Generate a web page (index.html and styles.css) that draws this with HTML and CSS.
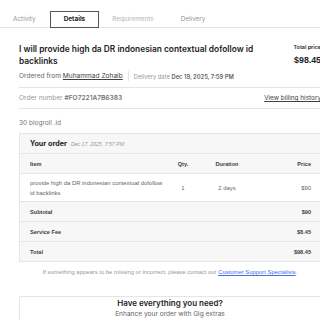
FILE: index.html
```html
<!DOCTYPE html>
<html lang="en">

<head>
    <meta charset="UTF-8">
    <meta name="viewport" content="width=device-width, initial-scale=1.0">
    <title>Order Details</title>
    <link rel="stylesheet" href="styles.css">
</head>

<body>

    <nav class="tabs">
        <a class="tab">Activity</a>
        <a class="tab active">Details</a>
        <a class="tab pale">Requirements</a>
        <a class="tab">Delivery</a>
    </nav>

    <main class="order">
        <header class="order-head">
            <div class="title-col">
                <h1>I will provide high da DR indonesian contextual dofollow id backlinks</h1>
                <p class="meta">
                    <span>Ordered from <a class="seller">Muhammad Zohaib</a></span>
                    <span class="divider"></span>
                    <span class="faint">Delivery date <b>Dec 19, 2025, 7:59 PM</b></span>
                </p>
            </div>
            <div class="price-col">
                <span class="price-label">Total price</span>
                <span class="price-value">$98.45</span>
            </div>
        </header>

        <div class="order-number">
            <span>Order number <b>#FO7221A7B6383</b></span>
            <a class="billing">View billing history</a>
        </div>

        <p class="gig-name">30 blogroll .id</p>

        <section class="summary">
            <div class="row caption">
                <h3>Your order</h3>
                <em>Dec 17, 2025, 7:57 PM</em>
            </div>
            <div class="row cols heads">
                <span>Item</span>
                <span class="mid">Qty.</span>
                <span class="mid">Duration</span>
                <span class="end">Price</span>
            </div>
            <div class="row cols item">
                <span>provide high da DR indonesian contextual dofollow id backlinks</span>
                <span class="mid">1</span>
                <span class="mid">2 days</span>
                <span class="end">$90</span>
            </div>
            <div class="row total-line">
                <span>Subtotal</span>
                <span>$90</span>
            </div>
            <div class="row total-line">
                <span>Service Fee</span>
                <span>$8.45</span>
            </div>
            <div class="row total-line">
                <span>Total</span>
                <span>$98.45</span>
            </div>
        </section>

        <p class="help">If something appears to be missing or incorrect, please contact our <a>Customer Support Specialists</a>.</p>

        <section class="extras">
            <h2>Have everything you need?</h2>
            <p>Enhance your order with Gig extras</p>
        </section>
    </main>

</body>

</html>
```

FILE: styles.css
```css
* {
    margin: 0;
    padding: 0;
    box-sizing: border-box;
}

body {
    font-family: 'Inter', 'Liberation Sans', sans-serif;
    background: #fff;
    color: #404145;
    overflow: hidden;
}

a {
    color: inherit;
}

/* tabs */

.tabs {
    display: flex;
    align-items: flex-end;
    height: 28px;
    border-bottom: 1px solid #e4e5e7;
}

.tab {
    height: 17px;
    line-height: 15px;
    padding: 0 11px 0 12px;
    margin-bottom: -1px;
    border: 1px solid transparent;
    font-size: 6.4px;
    color: #95979d;
}

.tab:first-child {
    padding-right: 13px;
}

.tab.active {
    border-color: #555;
    padding: 0 13px;
    color: #222;
    font-weight: 700;
}

.tab.pale {
    color: #b5b6ba;
    padding-right: 13px;
}

/* order */

.order {
    width: 302px;
    margin-left: 19px;
}

.order-head {
    display: flex;
    justify-content: space-between;
    padding: 15px 0 6px;
    border-bottom: 1px solid #e4e5e7;
}

.title-col h1 {
    width: 250px;
    font-size: 8.4px;
    line-height: 12px;
    font-weight: 600;
    color: #222325;
}

.meta {
    display: flex;
    align-items: center;
    margin-top: 4px;
    height: 10px;
    font-size: 6.6px;
    color: #62646a;
}

.seller {
    color: #404145;
    text-decoration: underline;
}

.divider {
    width: 1px;
    height: 10px;
    background: #e4e5e7;
    margin: 0 5px;
}

.faint {
    font-size: 5.8px;
    color: #95979d;
}

.faint b {
    color: #62646a;
    font-weight: 600;
}

.price-col {
    display: flex;
    flex-direction: column;
    align-items: flex-end;
    padding-top: 1px;
}

.price-label {
    font-size: 5.4px;
    font-weight: 600;
    color: #222;
}

.price-value {
    margin-top: 5px;
    font-family: 'Liberation Sans', sans-serif;
    font-size: 8.8px;
    font-weight: 700;
    color: #222325;
}

.order-number {
    display: flex;
    justify-content: space-between;
    align-items: center;
    height: 21px;
    border-bottom: 1px solid #e4e5e7;
    font-size: 6.6px;
    color: #95979d;
}

.order-number b {
    font-weight: 600;
    color: #74767e;
}

.billing {
    font-size: 6.4px;
    color: #404145;
    text-decoration: underline;
}

.gig-name {
    margin-top: 9px;
    line-height: 10px;
    font-size: 6.5px;
    color: #74767e;
}

/* summary table */

.summary {
    margin-top: 5px;
    border: 1px solid #e4e5e7;
    background: #f7f7f7;
    font-family: 'Liberation Sans', sans-serif;
}

.row {
    display: flex;
    align-items: center;
    justify-content: space-between;
    min-height: 20px;
    padding: 0 9px 0 10px;
    border-bottom: 1px solid #e4e5e7;
}

.row:last-child {
    border-bottom: none;
    min-height: 19px;
}

.caption {
    justify-content: flex-start;
    gap: 4px;
}

.caption h3 {
    font-family: 'Inter', sans-serif;
    font-size: 7.2px;
    font-weight: 700;
    color: #222325;
}

.caption em {
    font-size: 5.2px;
    color: #95979d;
}

.cols {
    display: grid;
    grid-template-columns: 140px 26px 62px 1fr;
}

.mid {
    text-align: center;
}

.end {
    text-align: right;
}

.heads {
    font-size: 5.6px;
    font-weight: 700;
    color: #404145;
}

.item {
    min-height: 28px;
    background: #fff;
    font-size: 5.9px;
    line-height: 10px;
    color: #62646a;
}

.item span:first-child {
    padding-right: 2px;
}

.total-line {
    font-size: 5.6px;
    font-weight: 700;
    color: #404145;
}

.help {
    margin-top: 6px;
    text-align: center;
    line-height: 8px;
    font-family: 'Liberation Sans', sans-serif;
    font-size: 5.9px;
    color: #95979d;
}

.help a {
    color: #446ee7;
    text-decoration: underline;
}

/* extras */

.extras {
    margin-top: 20px;
    padding-top: 1px;
    height: 40px;
    border: 1px solid #e4e5e7;
    border-radius: 2px;
    text-align: center;
}

.extras h2 {
    line-height: 10px;
    font-size: 8px;
    font-weight: 600;
    color: #222325;
}

.extras p {
    margin-top: 1px;
    line-height: 10px;
    font-size: 6.6px;
    color: #62646a;
}
```
